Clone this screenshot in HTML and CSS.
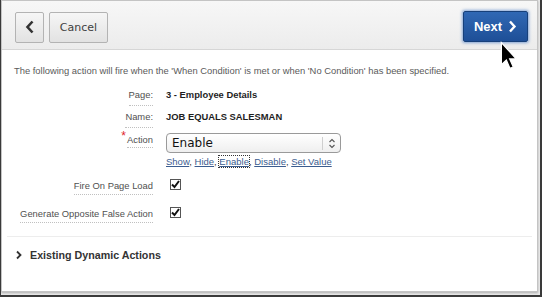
FILE: index.html
```html
<!DOCTYPE html>
<html>
<head>
    <title>Create Dynamic Action</title>
    <link rel="stylesheet" href="styles.css">
</head>
<body>
    <div class="window">
        <div class="dialog">
            <div class="toolbar">
                <button class="btn btn-back">
                    <svg width="10" height="14" viewBox="0 0 10 14"><path d="M7.5 1.5 L2.5 7 L7.5 12.5" fill="none" stroke="#333" stroke-width="2.6"/></svg>
                </button>
                <button class="btn btn-cancel">Cancel</button>
                <span class="spacer"></span>
                <button class="btn btn-next">Next
                    <svg width="9" height="13" viewBox="0 0 9 13"><path d="M2 1.5 L6.5 6.5 L2 11.5" fill="none" stroke="#fff" stroke-width="2.4"/></svg>
                </button>
            </div>

            <div class="content">
                <p class="intro">The following action will fire when the 'When Condition' is met or when 'No Condition' has been specified.</p>
                <div class="form">
                    <div class="lbl row-page"><span>Page:</span></div>
                    <div class="val row-page">3 - Employee Details</div>

                    <div class="lbl row-name"><span>Name:</span></div>
                    <div class="val row-name">JOB EQUALS SALESMAN</div>

                    <div class="lbl row-action"><span class="req">*</span><span>Action</span></div>
                    <div class="val row-action">
                        <div class="select">
                            <span class="select-text">Enable</span>
                            <span class="select-arrows">
                                <svg width="8" height="11" viewBox="0 0 8 11"><path d="M1.5 4 L4 1.5 L6.5 4 M1.5 7 L4 9.5 L6.5 7" fill="none" stroke="#555" stroke-width="1.1"/></svg>
                            </span>
                        </div>
                        <div class="quick">
                            <a href="#">Show</a>, <a href="#">Hide</a>, <a href="#" class="focused">Enable</a>, <a href="#">Disable</a>, <a href="#">Set Value</a>
                        </div>
                    </div>

                    <div class="lbl row-fire"><span>Fire On Page Load</span></div>
                    <div class="val row-fire"><span class="check"><svg width="11" height="11" viewBox="0 0 11 11"><path d="M2 5.5 L4.5 8 L9 2" fill="none" stroke="#111" stroke-width="2"/></svg></span></div>

                    <div class="lbl row-false"><span>Generate Opposite False Action</span></div>
                    <div class="val row-false"><span class="check"><svg width="11" height="11" viewBox="0 0 11 11"><path d="M2 5.5 L4.5 8 L9 2" fill="none" stroke="#111" stroke-width="2"/></svg></span></div>
                </div>
            </div>

            <div class="region">
                <svg width="8" height="10" viewBox="0 0 8 10"><path d="M2 1.5 L5.5 5 L2 8.5" fill="none" stroke="#333" stroke-width="1.8"/></svg>
                <span>Existing Dynamic Actions</span>
            </div>
        </div>

        <svg class="cursor" width="18" height="31" viewBox="0 0 13 22">
            <path d="M1 1 L1 17 L4.6 13.6 L7.2 19.6 L9.6 18.6 L7 12.8 L11.8 12.8 Z" fill="#000" stroke="#fff" stroke-width="0.9"/>
        </svg>
    </div>
</body>
</html>
```

FILE: styles.css
```css
body {
    margin: 0;
    background-color: #fff;
    font-family: "Liberation Sans", Arial, sans-serif;
}
.window {
    position: relative;
    width: 542px;
    height: 297px;
    box-sizing: border-box;
    border-left: 1px solid #3a3a3a;
    border-right: 2px solid #3a3a3a;
    border-bottom: 2px solid #3a3a3a;
    background-color: #e9e9e9;
    overflow: hidden;
}
.dialog {
    height: 292px;
    margin-right: 2px;
    box-sizing: border-box;
    border: 1px solid #c4c4c4;
    background-color: #fff;
    display: flex;
    flex-direction: column;
    box-shadow: 0 1px 2px rgba(0, 0, 0, 0.25);
}
.toolbar {
    height: 49px;
    box-sizing: border-box;
    border-bottom: 1px solid #d6d6d6;
    background: linear-gradient(#f7f7f7, #ececec);
    display: flex;
    align-items: center;
    padding: 0 9px 0 13px;
    gap: 5px;
}
.spacer {
    flex: 1;
}
.btn {
    height: 31px;
    box-sizing: border-box;
    border: 1px solid #b3b3b3;
    border-radius: 2px;
    background: linear-gradient(#f6f6f6, #e2e2e2);
    font-family: "DejaVu Sans", sans-serif;
    font-size: 11px;
    color: #404040;
    display: flex;
    align-items: center;
    justify-content: center;
    padding: 0;
    margin-top: 4px;
}
.btn-back {
    width: 29px;
}
.btn-cancel {
    width: 59px;
}
.btn-next {
    width: 65px;
    margin-top: 3px;
    border-color: #17407a;
    background: linear-gradient(#3068b4, #1e4f97);
    color: #fff;
    font-family: "Liberation Sans", Arial, sans-serif;
    font-weight: bold;
    font-size: 13px;
    gap: 6px;
    box-shadow: 0 0 3px 1px rgba(40, 100, 190, 0.55);
}
.content {
    padding: 15px 0 0 5px;
    flex: 1;
}
.intro {
    margin: 0 0 11px 7px;
    font-size: 9.4px;
    color: #5a5a5a;
}
.form {
    display: grid;
    grid-template-columns: 146px 1fr;
    column-gap: 13px;
    font-size: 9.4px;
}
.lbl {
    text-align: right;
    color: #505050;
}
.lbl span {
    display: inline-block;
    padding-bottom: 2px;
    border-bottom: 1px dotted #c0c0c0;
}
.lbl .req {
    border-bottom: none;
    color: #e0242b;
    font-size: 12px;
    vertical-align: top;
    margin-top: -5px;
    margin-right: 1px;
}
.val {
    color: #1e1e1e;
    font-weight: bold;
}
.row-page, .row-name {
    height: 22px;
    line-height: 16px;
}
.val.row-action {
    padding-top: 2px;
}
.lbl.row-action {
    padding-top: 3px;
}
.select {
    width: 175px;
    height: 20px;
    box-sizing: border-box;
    border: 1px solid #9a9a9a;
    border-radius: 4px;
    background: linear-gradient(#ffffff, #efefef);
    display: flex;
    align-items: center;
    font-family: "DejaVu Sans", sans-serif;
    font-weight: normal;
    font-size: 12px;
    color: #111;
}
.select-text {
    flex: 1;
    padding-left: 5px;
}
.select-arrows {
    width: 17px;
    height: 13px;
    border-left: 1px solid #cfcfcf;
    display: flex;
    align-items: center;
    justify-content: center;
}
.quick {
    margin-top: 2px;
    font-size: 9.5px;
    font-weight: normal;
    color: #333;
    line-height: 14px;
}
.quick a {
    color: #3b5c8f;
}
.quick a.focused {
    outline: 1px dotted #333;
}
.row-fire {
    padding-top: 10px;
    height: 17px;
    line-height: 13px;
}
.row-false {
    padding-top: 11px;
    height: 18px;
    line-height: 13px;
}
.check {
    display: inline-block;
    width: 11px;
    height: 11px;
    box-sizing: border-box;
    border: 1px solid #555;
    background-color: #fff;
    margin-left: 4px;
    position: relative;
}
.check svg {
    position: absolute;
    left: -1px;
    top: -1px;
}
.region {
    margin: 0 5px;
    height: 36px;
    border-top: 1px solid #ededed;
    display: flex;
    align-items: center;
    gap: 7px;
    padding: 0 0 18px 8px;
    font-size: 10.7px;
    font-weight: bold;
    color: #333;
}
.cursor {
    position: absolute;
    left: 499px;
    top: 41px;
}
```
